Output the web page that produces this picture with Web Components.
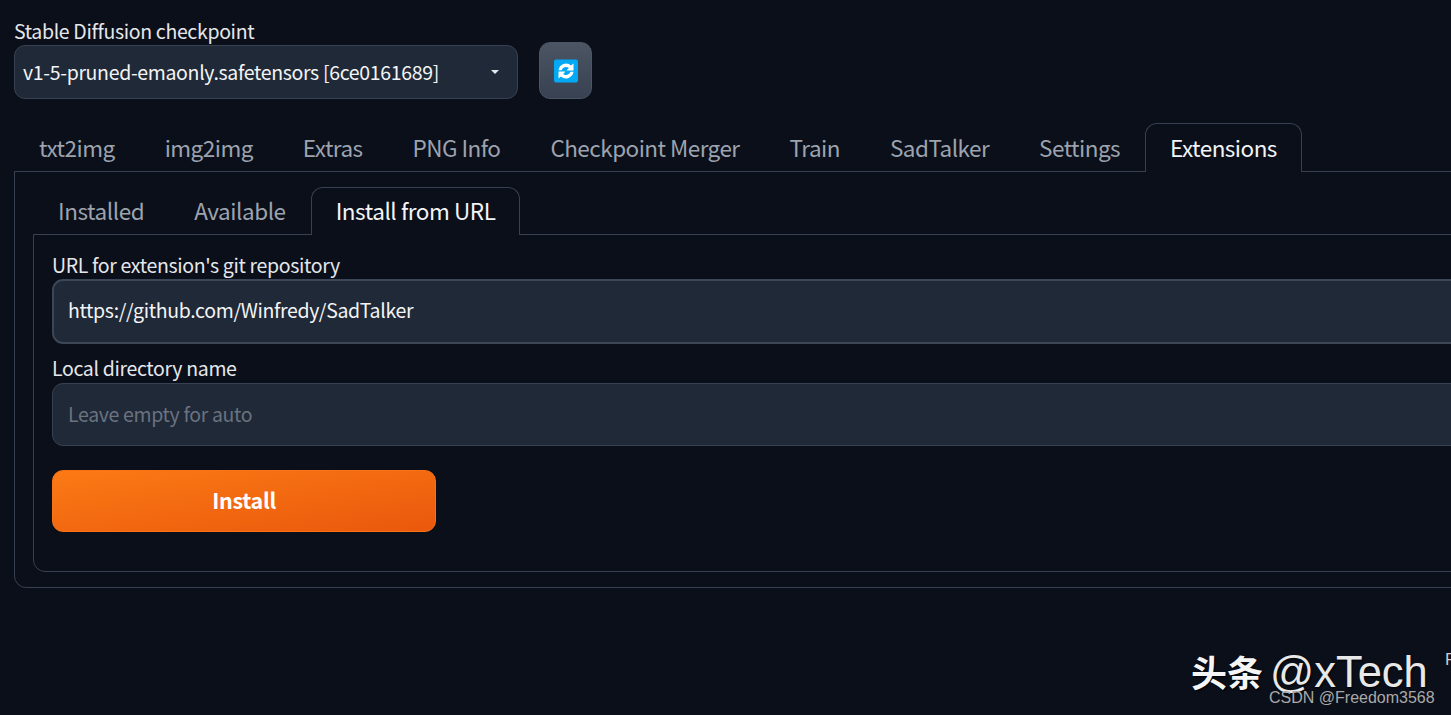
<!DOCTYPE html>
<html>
<head>
<meta charset="utf-8">
<style>
  html, body { margin: 0; height: 100%; overflow: hidden; background: #0b0f19; }
  body {
    color: #f3f4f6;
    font-family: "Noto Sans CJK SC", "Noto Sans", sans-serif;
    font-size: 19.5px;
    letter-spacing: -0.34px;
  }
  .page { width: 1520px; padding: 19px 0 0 14px; }
  .top { display: flex; align-items: flex-end; gap: 21px; margin-bottom: 24px; }
</style>
</head>
<body>
<div class="page">
  <div class="top">
    <model-select label="Stable Diffusion checkpoint" value="v1-5-pruned-emaonly.safetensors [6ce0161689]"></model-select>
    <refresh-button></refresh-button>
  </div>
  <tab-bar size="large" active="Extensions" tabs="txt2img,img2img,Extras,PNG Info,Checkpoint Merger,Train,SadTalker,Settings,Extensions"></tab-bar>
  <tab-panel variant="outer">
    <tab-bar size="small" active="Install from URL" tabs="Installed,Available,Install from URL"></tab-bar>
    <tab-panel variant="inner">
      <text-field label="URL for extension's git repository" value="https://github.com/Winfredy/SadTalker" focused></text-field>
      <text-field label="Local directory name" placeholder="Leave empty for auto"></text-field>
      <primary-button>Install</primary-button>
    </tab-panel>
  </tab-panel>
</div>
<water-mark></water-mark>

<script>
class ModelSelect extends HTMLElement {
  constructor() {
    super();
    this.attachShadow({ mode: 'open' });
    this.shadowRoot.innerHTML = `
      <style>
        :host { display: block; width: 504px; }
        .label { line-height: 24px; color: #e5e7eb; margin-bottom: 2px; }
        .box {
          height: 50px; box-sizing: content-box;
          display: flex; align-items: center; justify-content: space-between;
          padding: 0 18px 2px 8px;
          background: #1f2937; border: 1px solid #374151; border-radius: 11px;
          color: #f3f4f6; white-space: nowrap;
        }
        .arrow { width: 0; height: 0; margin-top: 2px; border-left: 4px solid transparent; border-right: 4px solid transparent; border-top: 4px solid #e5e7eb; }
      </style>
      <div class="label"></div>
      <div class="box"><span class="value"></span><span class="arrow"></span></div>`;
  }
  connectedCallback() {
    this.shadowRoot.querySelector('.label').textContent = this.getAttribute('label');
    this.shadowRoot.querySelector('.value').textContent = this.getAttribute('value');
  }
}
customElements.define('model-select', ModelSelect);

class RefreshButton extends HTMLElement {
  constructor() {
    super();
    this.attachShadow({ mode: 'open' });
    this.shadowRoot.innerHTML = `
      <style>
        :host { display: block; }
        button {
          display: flex; align-items: center; justify-content: center;
          width: 53px; height: 57px; padding: 0;
          background: linear-gradient(to bottom, #4b5563, #374151);
          border: 1px solid #4b5563; border-radius: 11px;
        }
        svg { display: block; width: 24px; height: 24px; }
      </style>
      <button>
        <svg viewBox="0 0 24 24">
          <rect x="0" y="0.5" width="24" height="23" rx="2" fill="#03a9f4"/>
          <path d="M4.5 11.2a7.6 7.6 0 0 1 12.6-4.6L19.5 4.5v7h-7l2.4-2.5A4.6 4.6 0 0 0 7.6 11.2z" fill="#fff"/>
          <path d="M19.5 12.8a7.6 7.6 0 0 1-12.6 4.6L4.5 19.5v-7h7l-2.4 2.5a4.6 4.6 0 0 0 7.3-2.2z" fill="#fff"/>
        </svg>
      </button>`;
  }
}
customElements.define('refresh-button', RefreshButton);

class TabBar extends HTMLElement {
  constructor() {
    super();
    this.attachShadow({ mode: 'open' });
    this.shadowRoot.innerHTML = `
      <style>
        :host { display: flex; position: relative; z-index: 1; margin-bottom: -1px; }
        :host([size="large"]) { --h: 48px; --ls: -0.53px; }
        :host([size="small"]) { --h: 47px; --ls: -0.44px; }
        .tab {
          height: var(--h); padding: 0 24px; line-height: calc(var(--h) - 2px);
          font-size: 22.5px; letter-spacing: var(--ls); color: #9ca3af; white-space: nowrap;
          border: 1px solid transparent; border-bottom: 0; border-radius: 12px 12px 0 0;
          box-sizing: content-box;
        }
        .tab.on { color: #f3f4f6; border-color: #374151; background: #0b0f19; }
      </style>`;
  }
  connectedCallback() {
    const active = this.getAttribute('active');
    this.getAttribute('tabs').split(',').forEach(name => {
      const t = document.createElement('div');
      t.className = name === active ? 'tab on' : 'tab';
      t.textContent = name;
      this.shadowRoot.appendChild(t);
    });
  }
}
customElements.define('tab-bar', TabBar);

class TabPanel extends HTMLElement {
  constructor() {
    super();
    this.attachShadow({ mode: 'open' });
    this.shadowRoot.innerHTML = `
      <style>
        :host { display: block; box-sizing: border-box; border: 1px solid #374151; border-radius: 0 0 0 12px; }
        :host([variant="outer"]) { padding: 15px 0 15px 18px; height: 417px; }
        :host([variant="inner"]) { padding: 18px 0 0 18px; height: 338px; }
      </style>
      <slot></slot>`;
  }
}
customElements.define('tab-panel', TabPanel);

class TextField extends HTMLElement {
  constructor() {
    super();
    this.attachShadow({ mode: 'open' });
    this.shadowRoot.innerHTML = `
      <style>
        :host { display: block; margin-bottom: 11px; }
        :host([focused]) { margin-bottom: 12px; }
        .label { line-height: 24px; color: #e5e7eb; margin-bottom: 3px; }
        :host([focused]) .label { margin-bottom: 2px; }
        .input {
          box-sizing: border-box; height: 63px; padding: 0 0 3px 15px;
          display: flex; align-items: center;
          background: #1f2937; border: 1px solid #374151; border-radius: 11px;
          color: #f3f4f6;
        }
        :host([focused]) .input { height: 65px; border-width: 2px; padding-left: 14px; padding-bottom: 4px; border-color: #3b4656; }
        .input.empty { color: #6b7280; }
      </style>
      <div class="label"></div>
      <div class="input"></div>`;
  }
  connectedCallback() {
    const input = this.shadowRoot.querySelector('.input');
    this.shadowRoot.querySelector('.label').textContent = this.getAttribute('label');
    input.textContent = this.getAttribute('value') || this.getAttribute('placeholder');
    if (!this.hasAttribute('value')) input.classList.add('empty');
  }
}
customElements.define('text-field', TextField);

class PrimaryButton extends HTMLElement {
  constructor() {
    super();
    this.attachShadow({ mode: 'open' });
    this.shadowRoot.innerHTML = `
      <style>
        :host { display: block; margin-top: 24px; width: 384px; }
        button {
          display: block; width: 100%; height: 62px; padding: 0 0 4px;
          background: linear-gradient(to bottom right, #fb7a15, #ea580c);
          border: 1px solid #f97316; border-radius: 11px;
          font: 600 21.5px "Noto Sans CJK SC", "Noto Sans", sans-serif; letter-spacing: -0.3px; color: #fff;
        }
      </style>
      <button><slot></slot></button>`;
  }
}
customElements.define('primary-button', PrimaryButton);

class WaterMark extends HTMLElement {
  constructor() {
    super();
    this.attachShadow({ mode: 'open' });
    this.shadowRoot.innerHTML = `
      <style>
        :host { display: block; position: absolute; left: 0; top: 0; width: 100%; height: 100%; overflow: hidden; pointer-events: none; letter-spacing: 0; }
        .brand {
          position: absolute; left: 1191px; top: 644px; white-space: nowrap;
          color: #e8e8e8; font: 43.5px/54px "Liberation Sans", sans-serif;
          text-shadow: 1px 1px 2px #000;
        }
        .cn { font: 700 36px/54px "Noto Sans CJK SC", sans-serif; margin-right: 7px; color: #f5f5f5; }
        .cut { position: absolute; left: 1445px; top: 650px; color: #ccc; font: 17px/20px "Liberation Sans", sans-serif; }
        .csdn {
          position: absolute; left: 1269px; top: 688px; white-space: nowrap;
          color: #a9a9a9; font: 16px/20px "Liberation Sans", sans-serif;
        }
      </style>
      <div class="brand"><span class="cn">头条</span>@xTech</div>
      <div class="cut">P</div>
      <div class="csdn">CSDN @Freedom3568</div>`;
  }
}
customElements.define('water-mark', WaterMark);
</script>
</body>
</html>
